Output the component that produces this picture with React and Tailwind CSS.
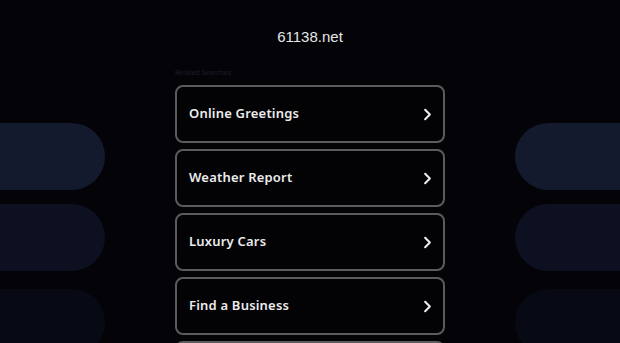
import { ChevronRight } from 'lucide-react';

const links = ['Online Greetings', 'Weather Report', 'Luxury Cars', 'Find a Business', 'Cheap Flights'];

const SidePills = ({ side }) => {
    const round = side === 'left' ? 'rounded-r-[34px]' : 'rounded-l-[34px]';
    return (
        <div className="w-[105px] shrink-0 pt-[123px] flex flex-col">
            <div className={`h-[67px] shrink-0 bg-[#141a2e] ${round}`} />
            <div className={`mt-[14px] h-[67px] shrink-0 bg-[#0c1020] ${round}`} />
            <div className={`mt-[18px] h-[67px] shrink-0 bg-[#070a15] ${round}`} />
        </div>
    );
};

const App = () => {
    return (
        <div className="h-[343px] overflow-hidden bg-[#040408] flex justify-between font-['Noto_Sans',sans-serif]">
            <SidePills side="left" />

            <div className="w-[270px] shrink-0 flex flex-col">
                <h1 className="shrink-0 pt-[28px] h-[52px] text-center text-[15px] leading-[18px] text-[#e6e6e6] font-['Liberation_Sans',Arial,sans-serif]">
                    61138.net
                </h1>
                <p className="shrink-0 mt-[17px] h-[16px] text-[7px] leading-[8px] text-[#1c1c2a]">Related Searches</p>

                <div className="shrink-0 flex flex-col gap-[6px]">
                    {links.map((label) => (
                        <a
                            key={label}
                            href="#"
                            className="h-[58px] shrink-0 flex items-center justify-between pl-[12px] pr-[6px] rounded-[8px] border-2 border-[#5b5b5e] bg-[#030306] text-[#ececec]"
                        >
                            <span className="text-[13px] font-semibold tracking-[0.2px]">{label}</span>
                            <ChevronRight size={19} strokeWidth={2.6} />
                        </a>
                    ))}
                </div>
            </div>

            <SidePills side="right" />
        </div>
    );
};

export default App;
